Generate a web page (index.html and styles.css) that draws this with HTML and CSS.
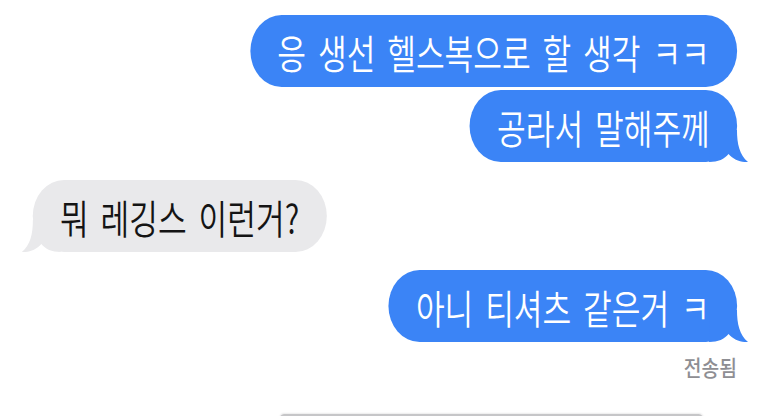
FILE: index.html
```html
<!DOCTYPE html>
<html lang="ko">
<head>
<meta charset="utf-8">
<link rel="stylesheet" href="styles.css">
</head>
<body>
<div class="thread">
  <div class="row sent">
    <div class="bubble blue">응 생선 헬스복으로 할 생각 ㅋㅋ</div>
  </div>
  <div class="row sent gap-s">
    <div class="bubble blue">공라서 말해주께<svg class="tail tail-r" viewBox="0 0 60 32" preserveAspectRatio="none"><path d="M0 0H43C43 14 47 25 60 32C49 32.5 38 30 30 24C24 29 14 32 0 32Z"/></svg></div>
  </div>
  <div class="row recv gap-l">
    <div class="bubble gray">뭐 레깅스 이런거?<svg class="tail tail-l" viewBox="0 0 60 32" preserveAspectRatio="none"><path d="M0 0H43C43 14 47 25 60 32C49 32.5 38 30 30 24C24 29 14 32 0 32Z"/></svg></div>
  </div>
  <div class="row sent gap-l">
    <div class="bubble blue">아니 티셔츠 같은거 ㅋ<svg class="tail tail-r" viewBox="0 0 60 32" preserveAspectRatio="none"><path d="M0 0H43C43 14 47 25 60 32C49 32.5 38 30 30 24C24 29 14 32 0 32Z"/></svg></div>
  </div>
  <div class="status"><span class="status-text">전송됨</span></div>
  <div class="composer"></div>
</div>
</body>
</html>
```
FILE: styles.css
```css
html, body {
  margin: 0;
  padding: 0;
  background: #ffffff;
  overflow: hidden;
}
body {
  width: 773px;
  height: 416px;
  font-family: "Noto Sans CJK KR", "Noto Sans", sans-serif;
}
.thread {
  width: 991px;
  padding-top: 15px;
  transform: scaleX(0.78);
  transform-origin: 0 0;
  display: flex;
  flex-direction: column;
}
.row {
  display: flex;
}
.row.sent {
  justify-content: flex-end;
  padding-right: 46px;
}
.row.recv {
  justify-content: flex-start;
  padding-left: 42px;
}
.gap-s { margin-top: 3px; }
.gap-l { margin-top: 18px; }
.bubble {
  position: relative;
  font-size: 40px;
  font-weight: 350;
  line-height: 74px;
  height: 72px;
  padding: 0 35px;
  border-radius: 40px / 36px;
  white-space: nowrap;
  word-spacing: 4px;
}
.bubble.blue {
  background: #3b84f6;
  color: #ffffff;
}
.bubble.gray {
  background: #e9e9eb;
  color: #141414;
}
.tail {
  position: absolute;
  bottom: 0;
  width: 50px;
  height: 32px;
}
.tail-r {
  right: -14px;
}
.tail-l {
  left: -14px;
  transform: scaleX(-1);
}
.blue .tail path { fill: #3b84f6; }
.gray .tail path { fill: #e9e9eb; }
.status {
  margin-top: 12px;
  padding-right: 46px;
  text-align: right;
  height: 24px;
}
.status-text {
  display: inline-block;
  font-size: 22px;
  line-height: 24px;
  font-weight: 500;
  color: #8e8e93;
  transform: scaleX(1.12);
  transform-origin: 100% 50%;
}
.composer {
  margin-top: 36px;
  margin-left: 358px;
  width: 544px;
  height: 40px;
  border-top: 2px solid #c6c6c8;
  border-radius: 6px 6px 0 0;
  box-shadow: 0 -1px 2px rgba(0,0,0,0.08);
}
```
